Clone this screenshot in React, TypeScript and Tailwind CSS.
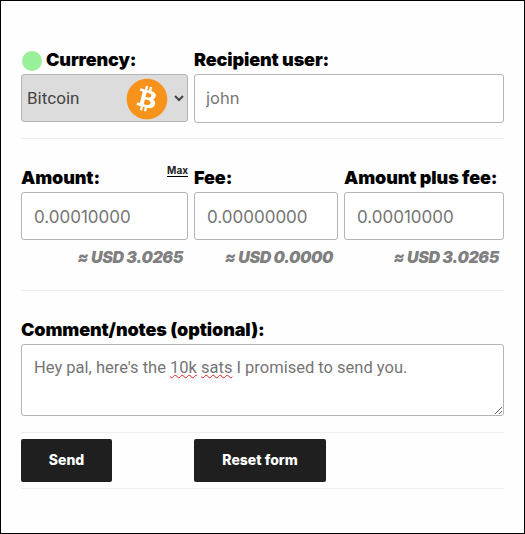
import React from 'react';
import { FaBitcoin } from 'react-icons/fa';

const Label: React.FC<{ children: React.ReactNode; className?: string }> = ({ children, className }) => (
  <label className={`block text-[18px] leading-[24px] font-black text-black tracking-[-0.12px] whitespace-nowrap ${className ?? ''}`}>{children}</label>
);

const inputCls =
  'block w-full bg-white border border-[#b4b4b4] rounded-[3px] text-[#757575] placeholder:text-[#757575] outline-none';
const amountCls = `${inputCls} h-[48px] px-[12px] pt-[1px] text-[17px]`;

const Usd: React.FC<{ value: string }> = ({ value }) => (
  <div className="mt-[5px] pr-[5px] text-right text-[16px] leading-[24px] font-black italic text-[#808080] tracking-[-0.4px]">≈ USD {value}</div>
);

const App: React.FC = () => {
  return (
    <div className="w-[525px] h-[534px] bg-[#fefefe] border border-black px-[20px] pt-[46px] overflow-hidden" style={{ fontFamily: 'Inter, "Liberation Sans", sans-serif' }}>
      <div className="flex gap-[6px] w-[483px]">
        <div className="w-[167px] shrink-0">
          <div className="flex items-center h-[27px]">
            <span className="w-[20px] h-[20px] ml-[1px] mr-[4px] rounded-full bg-[#98f098]" />
            <Label className="-mt-[2px]">Currency:</Label>
          </div>
          <div className="relative">
            <select className="block w-full h-[48px] pl-[1px] bg-[#dcdcdc] border border-[#b4b4b4] rounded-[3px] text-[17px] text-[#444] outline-none" style={{ fontFamily: 'Roboto, sans-serif' }}>
              <option>Bitcoin</option>
            </select>
            <span className="absolute left-[109px] top-[8px] w-[33px] h-[33px] rounded-full bg-white flex items-center justify-center">
              <FaBitcoin className="shrink-0 w-[42px] h-[42px] text-[#f7931a]" />
            </span>
          </div>
        </div>
        <div className="flex-1">
          <Label className="h-[27px] pt-[1px]">Recipient user:</Label>
          <input className={`${inputCls} h-[49px] px-[11px] pb-[1px] text-[16.5px]`} placeholder="john" />
        </div>
      </div>

      <hr className="w-[483px] mt-[15px] border-0 border-t border-[#eeeeee]" />

      <div className="flex gap-[6px] w-[483px] mt-[26px]">
        <div className="w-[167px] shrink-0">
          <div className="flex justify-between h-[27px]">
            <Label className="pt-[1px]">Amount:</Label>
            <span className="h-[12px] text-[10px] leading-[11px] font-bold text-[#222] border-b border-black">Max</span>
          </div>
          <input className={amountCls} defaultValue="0.00010000" />
          <Usd value="3.0265" />
        </div>
        <div className="w-[144px] shrink-0">
          <Label className="h-[27px] pt-[1px]">Fee:</Label>
          <input className={amountCls} defaultValue="0.00000000" />
          <Usd value="0.0000" />
        </div>
        <div className="flex-1">
          <Label className="h-[27px] pt-[1px]">Amount plus fee:</Label>
          <input className={amountCls} defaultValue="0.00010000" />
          <Usd value="3.0265" />
        </div>
      </div>

      <hr className="w-[483px] mt-[21px] border-0 border-t border-[#eeeeee]" />

      <Label className="mt-[27px] h-[26px]">Comment/notes (optional):</Label>
      <div className="w-[483px] h-[72px] px-[12px] pt-[11px] pb-[9px] bg-white border border-[#b4b4b4] rounded-[3px] text-[16.5px] leading-[24px] text-[#757575] resize overflow-auto" style={{ fontFamily: 'Roboto, sans-serif' }}>
        Hey pal, here's the{' '}
        <span className="underline decoration-wavy decoration-[#e02020] decoration-1">10k</span>{' '}
        <span className="underline decoration-wavy decoration-[#e02020] decoration-1">sats</span> I promised to send you.
      </div>

      <hr className="w-[483px] mt-[16px] border-0 border-t border-[#eeeeee]" />

      <div className="flex w-[483px] mt-[6px]">
        <button className="w-[91px] h-[43px] pb-[2px] bg-[#1f1f1f] rounded-[2px] text-white text-[14px] font-extrabold">Send</button>
        <button className="w-[132px] h-[43px] ml-[82px] pb-[2px] bg-[#1f1f1f] rounded-[2px] text-white text-[14px] font-extrabold">Reset form</button>
      </div>

      <hr className="w-[483px] mt-[6px] border-0 border-t border-[#eeeeee]" />
    </div>
  );
};

export default App;
